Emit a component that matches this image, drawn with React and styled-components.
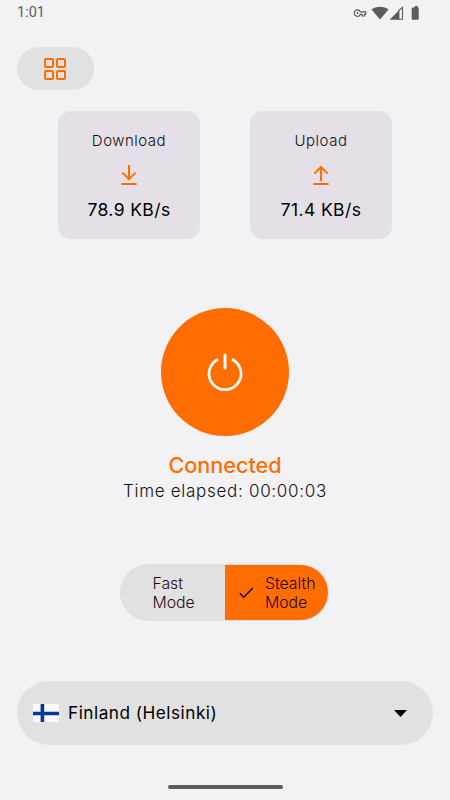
import React from 'react';
import styled, { createGlobalStyle } from 'styled-components';

const GlobalStyle = createGlobalStyle`
  :root {
    --bg: #f2f2f4;
    --accent: #ff6d00;
    --surface: #e1e1e1;
    --card: #e5e0e7;
    --status: #5c5c5d;
  }

  * {
    box-sizing: border-box;
  }

  body {
    margin: 0;
    background-color: var(--bg);
    font-family: Inter, 'Liberation Sans', sans-serif;
    color: #111;
  }

  button {
    border: none;
    padding: 0;
    font: inherit;
    color: inherit;
  }

  svg {
    display: block;
    flex-shrink: 0;
  }
`;

const Screen = styled.div`
  width: 450px;
  height: 800px;
  overflow: hidden;
  display: flex;
  flex-direction: column;
  background-color: var(--bg);
`;

const StatusBarStyle = styled.header`
  height: 25px;
  padding: 0 29px 0 17px;
  display: flex;
  align-items: center;
  justify-content: space-between;
  color: var(--status);
  font: 400 14.5px/25px Roboto, sans-serif;
`;

const MenuButton = styled.button`
  width: 77px;
  height: 43px;
  margin: 22px 0 0 17px;
  padding: 0 1px 0 0;
  display: flex;
  align-items: center;
  justify-content: center;
  border-radius: 22px;
  background-color: var(--surface);
`;

const SpeedRow = styled.section`
  margin-top: 21px;
  display: flex;
  justify-content: center;
  gap: 50px;
`;

const SpeedCardStyle = styled.div`
  width: 142px;
  height: 128px;
  padding-top: 20px;
  display: flex;
  flex-direction: column;
  align-items: center;
  border-radius: 13px;
  background-color: var(--card);

  .speed__icon {
    margin: 14px 0 7px;
  }
`;

const Text = styled.span`
  font-size: ${({ $size }) => $size}px;
  font-weight: ${({ $weight }) => $weight || 300};
  line-height: ${({ $line }) => $line}px;
  letter-spacing: ${({ $spacing }) => $spacing || 0}px;
  color: ${({ $color }) => $color || '#111'};
  white-space: pre;
`;

const Connection = styled.section`
  margin-top: 69px;
  display: flex;
  flex-direction: column;
  align-items: center;
`;

const PowerButton = styled.button`
  width: 128px;
  height: 128px;
  margin-bottom: 16px;
  padding-bottom: 1px;
  display: flex;
  align-items: center;
  justify-content: center;
  border-radius: 50%;
  background-color: var(--accent);
`;

const ModeSwitch = styled.div`
  width: 209px;
  height: 57px;
  margin: 60px auto 0 120px;
  display: flex;
  overflow: hidden;
  border: 1px solid #e3dfe0;
  border-radius: 29px;
  background-color: var(--surface);
`;

const ModeButton = styled.button`
  width: ${({ $active }) => ($active ? 103 : 104)}px;
  padding: 1px 0 0 ${({ $active }) => ($active ? 13 : 31.5)}px;
  display: flex;
  align-items: center;
  gap: 11px;
  text-align: left;
  background-color: ${({ $active }) =>
    $active ? 'var(--accent)' : 'transparent'};
`;

const LocationButton = styled.button`
  height: 64px;
  margin: 60px 17px 0;
  padding: 0 26px 0 16px;
  display: flex;
  align-items: center;
  border-radius: 32px;
  background-color: var(--surface);

  .location__name {
    flex: 1;
    margin-left: 9px;
    text-align: left;
  }

  .location__arrow {
    margin-top: 1px;
  }
`;

const HomeIndicator = styled.div`
  width: 115px;
  height: 4px;
  margin: 40px auto 0;
  border-radius: 2px;
  background-color: #5b5c5d;
`;

const StatusIcons = () => (
  <svg width="68" height="16" viewBox="0 0 68 16" fill="currentColor">
    <path
      d="M7.3 6.8C6.8 5.6 5.8 4.9 4.5 4.9a3.2 3.2 0 1 0 0 6.4c1.3 0 2.3-.7 2.8-1.9h1.8V11h2.5V9.4h1.1V6.8z"
      fill="none"
      stroke="currentColor"
      strokeWidth="1.2"
    />
    <circle cx="4.5" cy="8.1" r="1" />
    <path d="M18.5 4.5C23 .7 31.2 .7 35.5 4.5L27 14.5z" />
    <path d="M36.5 14.8 46.2 5.2v9.6z" />
    <path
      d="M45.7 14.2V5.6L49.5 2.5V14.2z"
      fill="none"
      stroke="currentColor"
      strokeWidth="1.1"
    />
    <path d="M60 2.4h1.700V1.100h3v1.300h.2q.8 0 .8.800v10.600q0 .9-.9.900h-5.200q-.9 0-.9-.9V3.200q0-.8.800-.8z" />
  </svg>
);

const GridIcon = () => (
  <svg
    width="22"
    height="22"
    viewBox="0 0 22 22"
    fill="none"
    stroke="var(--accent)"
    strokeWidth="2"
  >
    <rect x="1" y="1" width="8" height="8" rx="1" />
    <rect x="13" y="1" width="8" height="8" rx="1" />
    <rect x="1" y="13" width="8" height="8" rx="1" />
    <rect x="13" y="13" width="8" height="8" rx="1" />
  </svg>
);

const ArrowIcon = ({ up }) => (
  <svg
    className="speed__icon"
    width="16"
    height="22"
    viewBox="0 0 16 22"
    fill="none"
    stroke="var(--accent)"
    strokeWidth="2"
  >
    <path
      d={
        up
          ? 'M8 16V2.500M1.400 8.600 8 2l6.600 6.600'
          : 'M8 0v14M1.400 7.600 8 14.200l6.600-6.600'
      }
    />
    <path d="M.4 19h15.200" />
  </svg>
);

const PowerIcon = () => (
  <svg
    width="36"
    height="40"
    viewBox="0 0 36 40"
    fill="none"
    stroke="#fff"
    strokeWidth="2.7"
  >
    <path d="M18 3v13" strokeWidth="3" strokeLinecap="round" />
    <path d="M11.2 7.2a16 16 0 1 0 13.6 0" />
  </svg>
);

const CheckIcon = () => (
  <svg
    width="16"
    height="14"
    viewBox="0 0 16 14"
    fill="none"
    stroke="#111"
    strokeWidth="1.6"
  >
    <path d="m1.8 7.2 4 4L14.8 2" />
  </svg>
);

const FinlandFlag = () => (
  <svg width="26" height="18" viewBox="0 0 26 18">
    <path fill="#fafafa" d="M0 0h26v18H0z" />
    <path fill="#06379a" d="M0 7.7h26v3.5H0zM7.6 0h3.6v18H7.6z" />
  </svg>
);

const SpeedCard = ({ title, value, up }) => {
  return (
    <SpeedCardStyle>
      <Text $size={15} $line={20} $spacing={0.5}>
        {title}
      </Text>
      <ArrowIcon up={up} />
      <Text
        $size={17.5}
        $line={32}
        $weight={400}
        $spacing={0.4}
        $color="#000"
      >
        {value}
      </Text>
    </SpeedCardStyle>
  );
};

const App = () => {
  return (
    <Screen>
      <GlobalStyle />
      <StatusBarStyle>
        <span>1:01</span>
        <StatusIcons />
      </StatusBarStyle>
      <MenuButton aria-label="Menu">
        <GridIcon />
      </MenuButton>
      <SpeedRow>
        <SpeedCard title="Download" value="78.9 KB/s" />
        <SpeedCard title="Upload" value="71.4 KB/s" up />
      </SpeedRow>
      <Connection>
        <PowerButton aria-label="Disconnect">
          <PowerIcon />
        </PowerButton>
        <Text $size={21.6} $line={27} $weight={500} $color="var(--accent)">
          Connected
        </Text>
        <Text $size={17} $line={25} $spacing={0.7}>
          Time elapsed: 00:00:03
        </Text>
      </Connection>
      <ModeSwitch>
        <ModeButton>
          <Text $size={15.8} $line={19.5} $color="#2a0a12">
            {'Fast\nMode'}
          </Text>
        </ModeButton>
        <ModeButton $active>
          <CheckIcon />
          <Text $size={15.8} $line={19.5} $color="#1c0700">
            {'Stealth\nMode'}
          </Text>
        </ModeButton>
      </ModeSwitch>
      <LocationButton>
        <FinlandFlag />
        <Text
          className="location__name"
          $size={17.2}
          $line={24}
          $weight={400}
          $spacing={0.5}
          $color="#000"
        >
          Finland (Helsinki)
        </Text>
        <svg
          className="location__arrow"
          width="13"
          height="7"
          viewBox="0 0 13 7"
        >
          <path d="M0 0h13L6.5 7z" />
        </svg>
      </LocationButton>
      <HomeIndicator />
    </Screen>
  );
};

export default App;
